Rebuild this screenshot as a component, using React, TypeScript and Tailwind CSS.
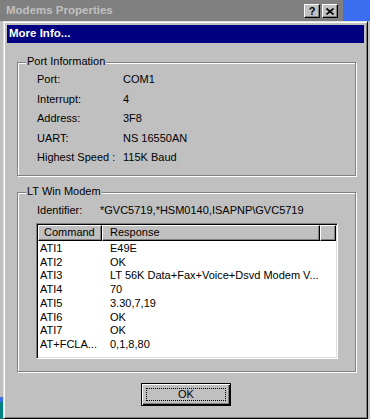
import React from 'react';

const portRows = [
  ['Port:', 'COM1'],
  ['Interrupt:', '4'],
  ['Address:', '3F8'],
  ['UART:', 'NS 16550AN'],
  ['Highest Speed :', '115K Baud'],
];

const atRows = [
  ['ATI1', 'E49E'],
  ['ATI2', 'OK'],
  ['ATI3', 'LT 56K Data+Fax+Voice+Dsvd Modem V...'],
  ['ATI4', '70'],
  ['ATI5', '3.30,7,19'],
  ['ATI6', 'OK'],
  ['ATI7', 'OK'],
  ['AT+FCLA...', '0,1,8,80'],
];

// classic 3d bevels
const raised =
  'border border-t-white border-l-white border-r-black border-b-black shadow-[inset_-1px_-1px_0_#808080]';
const etched = 'border border-[#808080] shadow-[1px_1px_0_#fff,inset_1px_1px_0_#fff]';

const App: React.FC = () => {
  return (
    <div className="relative w-[370px] h-[419px] overflow-hidden bg-[#c0c0c0] text-black text-[11px] font-['Liberation_Sans',Arial,sans-serif]">
      {/* parent window caption, inactive */}
      <div className="flex h-[21px]">
        <div className="w-[343px] bg-[#808080] flex items-center pl-[6px] pr-[5px]">
          <span className="flex-1 font-bold text-[11.5px] text-[#c0c0c0] leading-none">Modems Properties</span>
          <div className="flex gap-[2px] mt-[1px]">
            <div className={`w-[16px] h-[14px] bg-[#c0c0c0] flex items-center justify-center ${raised}`}>
              <span className="font-bold text-[11px] leading-none">?</span>
            </div>
            <div className={`w-[16px] h-[14px] bg-[#c0c0c0] flex items-center justify-center ${raised}`}>
              <svg width="8" height="7" viewBox="0 0 8 7">
                <path d="M0.5 0.5 L7.5 6.5 M7.5 0.5 L0.5 6.5" stroke="#000" strokeWidth="1.6" />
              </svg>
            </div>
          </div>
        </div>
        <div className="flex-1 bg-[#3a6df0]" />
      </div>

      {/* bits of desktop peeking out */}
      <div className="absolute left-0 top-[397px] w-[3px] h-[5px] bg-[#3a6df0]" />
      <div className="absolute left-0 top-[402px] w-[3px] h-[17px] bg-[#008080]" />

      {/* More Info dialog */}
      <div className="absolute left-[3px] top-[21px] w-[365px] h-[398px] p-[2px] bg-[#c0c0c0] border border-t-[#dfdfdf] border-l-[#dfdfdf] border-r-black border-b-black shadow-[inset_1px_1px_0_#fff,inset_-1px_-1px_0_#808080] flex flex-col">
        <div className="h-[18px] bg-[#000080] flex items-center pl-[2px] mx-[1px] mt-[1px]">
          <span className="font-bold text-[11.5px] text-white leading-none">More Info...</span>
        </div>

        {/* Port Information */}
        <div className={`relative ml-[11px] mt-[19px] w-[339px] h-[114px] ${etched}`}>
          <span className="absolute left-[8px] top-[-9px] px-[1px] bg-[#c0c0c0] leading-[14px]">Port Information</span>
          <div className="flex flex-col pt-[6.5px] pl-[19px]">
            {portRows.map(([k, v]) => (
              <div key={k} className="flex h-[19.5px] items-center">
                <span className="w-[86px]">{k}</span>
                <span>{v}</span>
              </div>
            ))}
          </div>
        </div>

        {/* LT Win Modem */}
        <div className={`relative ml-[11px] mt-[16px] w-[339px] h-[180px] ${etched}`}>
          <span className="absolute left-[8px] top-[-9px] px-[1px] bg-[#c0c0c0] leading-[14px]">LT Win Modem</span>
          <div className="flex h-[19.5px] items-center mt-[7px] pl-[19px]">
            <span className="w-[63px]">Identifier:</span>
            <span>*GVC5719,*HSM0140,ISAPNP\GVC5719</span>
          </div>
          <div className="ml-[18px] mt-[3px] w-[302px] h-[136px] p-[1px] bg-white border border-t-[#808080] border-l-[#808080] border-r-white border-b-white shadow-[inset_1px_1px_0_#000,inset_-1px_-1px_0_#dfdfdf] flex flex-col">
            <div className="flex h-[16px] bg-[#c0c0c0] shrink-0">
              <div className={`w-[64px] flex items-center pl-[5px] ${raised}`}>Command</div>
              <div className={`w-[218px] flex items-center pl-[7px] ${raised}`}>Response</div>
              <div className={`flex-1 ${raised}`} />
            </div>
            <div className="flex flex-col pt-[1px]">
              {atRows.map(([c, r]) => (
                <div key={c} className="flex h-[13.7px] items-center pl-[2px] whitespace-nowrap">
                  <span className="w-[70px]">{c}</span>
                  <span>{r}</span>
                </div>
              ))}
            </div>
          </div>
        </div>

        <button className="relative ml-[135px] mt-[11px] w-[90px] h-[23px] bg-[#c0c0c0] border border-black shadow-[inset_1px_1px_0_#fff,inset_-1px_-1px_0_#000,inset_-2px_-2px_0_#808080] flex items-center justify-center">
          <span className="absolute inset-[4px] border border-dotted border-black" />
          <span className="leading-none">OK</span>
        </button>
      </div>
    </div>
  );
};

export default App;
